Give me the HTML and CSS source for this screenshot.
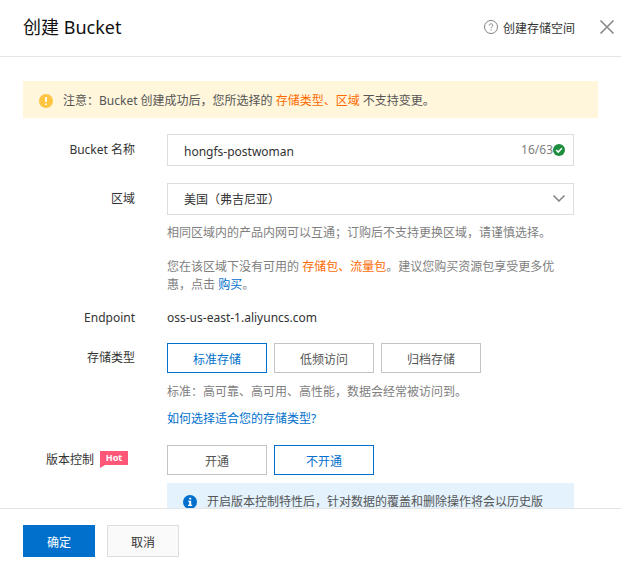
FILE: index.html
```
<!DOCTYPE html>
<html lang="zh-CN">
<head>
    <meta charset="UTF-8">
    <meta name="viewport" content="width=device-width, initial-scale=1.0">
    <title>创建 Bucket</title>
    <link rel="stylesheet" href="styles.css">
</head>
<body>
    <div class="drawer">
        <header class="header">
            <h1 class="title">创建 Bucket</h1>
            <a class="help-link" href="#">
                <svg width="14" height="14" viewBox="0 0 14 14" fill="none" stroke="#808080">
                    <circle cx="7" cy="7" r="6.5"/>
                    <path d="M5.2 5.6c0-1.1.8-1.8 1.8-1.8s1.8.7 1.8 1.6c0 1.2-1.7 1.3-1.7 2.8M7.1 9.3v1.1"/>
                </svg>
                创建存储空间
            </a>
            <button class="close" type="button" aria-label="关闭">
                <svg width="16" height="16" viewBox="0 0 16 16" stroke="#888" stroke-width="1.6">
                    <path d="M1.5 1.5l13 13M14.5 1.5l-13 13"/>
                </svg>
            </button>
        </header>

        <form class="content" id="bucketForm">
            <div class="notice">
                <svg width="14" height="14" viewBox="0 0 14 14">
                    <circle cx="7" cy="7" r="7" fill="#ffc440"/>
                    <path d="M7 3v5M7 9.5v1.6" stroke="#fff" stroke-width="1.8"/>
                </svg>
                <p>注意：Bucket 创建成功后，您所选择的 <span class="warn">存储类型、区域</span> 不支持变更。</p>
            </div>

            <div class="row">
                <label class="label" for="bucketName">Bucket 名称</label>
                <div class="field">
                    <div class="box">
                        <input class="control" type="text" id="bucketName" value="hongfs-postwoman">
                        <span class="count">16/63</span>
                        <svg width="12" height="12" viewBox="0 0 12 12">
                            <circle cx="6" cy="6" r="6" fill="#1e8e3e"/>
                            <path d="M3.2 6l2 2 3.7-3.7" fill="none" stroke="#fff" stroke-width="1.6"/>
                        </svg>
                    </div>
                </div>
            </div>

            <div class="row">
                <label class="label" for="region">区域</label>
                <div class="field">
                    <div class="box">
                        <select class="control" id="region">
                            <option>美国（弗吉尼亚）</option>
                        </select>
                        <svg class="arrow" width="12" height="12" viewBox="0 0 12 12" fill="none" stroke="#808080" stroke-width="1.5">
                            <path d="M.5 2.5L6 8l5.5-5.5"/>
                        </svg>
                    </div>
                    <p class="tip">相同区域内的产品内网可以互通；订购后不支持更换区域，请谨慎选择。</p>
                    <p class="tip tip-package">您在该区域下没有可用的 <span class="warn">存储包、流量包</span>。建议您购买资源包享受更多优惠，点击 <a class="link" href="#">购买</a>。</p>
                </div>
            </div>

            <div class="row row-text">
                <div class="label">Endpoint</div>
                <div class="field">oss-us-east-1.aliyuncs.com</div>
            </div>

            <div class="row" role="radiogroup" aria-labelledby="storageLabel">
                <div class="label" id="storageLabel">存储类型</div>
                <div class="field">
                    <div class="options">
                        <label class="option"><input type="radio" name="storage" checked><span>标准存储</span></label>
                        <label class="option"><input type="radio" name="storage"><span>低频访问</span></label>
                        <label class="option"><input type="radio" name="storage"><span>归档存储</span></label>
                    </div>
                    <p class="tip">标准：高可靠、高可用、高性能，数据会经常被访问到。</p>
                    <p class="tip"><a class="link" href="#">如何选择适合您的存储类型?</a></p>
                </div>
            </div>

            <div class="row" role="radiogroup" aria-labelledby="versionLabel">
                <div class="label label-hot">
                    <span id="versionLabel">版本控制</span>
                    <span class="hot">Hot</span>
                </div>
                <div class="field">
                    <div class="options">
                        <label class="option"><input type="radio" name="version"><span>开通</span></label>
                        <label class="option"><input type="radio" name="version" checked><span>不开通</span></label>
                    </div>
                    <div class="info">
                        <svg width="14" height="14" viewBox="0 0 14 14">
                            <circle cx="7" cy="7" r="7" fill="#0070cc"/>
                            <path d="M6.2 2.8h2v1.8h-2zM5.3 5.8h2.9v4h1v1.2H5v-1.2h1.2V7h-.9z" fill="#fff"/>
                        </svg>
                        <p>开启版本控制特性后，针对数据的覆盖和删除操作将会以历史版</p>
                    </div>
                </div>
            </div>
        </form>

        <footer class="footer">
            <button class="btn btn-primary" type="submit" form="bucketForm">确定</button>
            <button class="btn" type="button">取消</button>
        </footer>
    </div>
</body>
</html>
```

FILE: styles.css
```
* {
    box-sizing: border-box;
}
body {
    margin: 0;
    font-family: "Noto Sans", "Noto Sans CJK SC", sans-serif;
    font-size: 12px;
    line-height: 18px;
    color: #333;
    background-color: #fff;
}
p {
    margin: 0;
}
svg {
    flex: none;
}
button, input, select {
    font: inherit;
    color: inherit;
}
.drawer {
    display: flex;
    flex-direction: column;
    height: 100vh;
}

/* Header */
.header {
    display: flex;
    align-items: center;
    flex: none;
    height: 57px;
    padding: 0 6px 2px 23px;
    border-bottom: 1px solid #e5e5e5;
}
.title {
    flex: 1;
    margin: 0;
    font-size: 18px;
    font-weight: normal;
    line-height: 24px;
    color: #111;
}
.help-link {
    display: flex;
    align-items: flex-start;
    gap: 5px;
    padding-top: 4px;
    color: #333;
    text-decoration: none;
}
.close {
    display: flex;
    margin-left: 24px;
    padding: 0;
    border: none;
    background: none;
}

/* Form */
.content {
    flex: 1;
    min-height: 0;
    overflow: hidden;
    padding: 24px 23px 0;
}
.notice {
    display: flex;
    align-items: center;
    gap: 10px;
    height: 37px;
    margin-bottom: 16px;
    padding: 2px 16px 0;
    color: #555;
    background-color: #fff6db;
}
.warn {
    color: #ff6a00;
}
.link {
    color: #0070cc;
    text-decoration: none;
}
.row {
    display: flex;
    gap: 32px;
    margin-bottom: 17px;
    padding-right: 24px;
}
.row-text {
    margin-top: -2px;
    margin-bottom: 16px;
}
.label {
    flex: none;
    width: 112px;
    padding-top: 6px;
    text-align: right;
}
label.label {
    padding-top: 7px;
}
.row-text .label {
    padding-top: 0;
}
.field {
    flex: 1;
    min-width: 0;
}
.box {
    display: flex;
    align-items: center;
    height: 32px;
    padding-right: 8px;
    border: 1px solid #dedede;
}
.control {
    flex: 1;
    min-width: 0;
    height: 30px;
    padding: 2px 16px 0;
    border: none;
    outline: none;
    background: none;
    appearance: none;
}
.count {
    color: #808080;
}
.arrow {
    pointer-events: none;
}
.tip {
    margin-top: 9px;
    color: #808080;
}
.tip-package {
    margin-top: 16px;
}
.options {
    display: flex;
    gap: 7px;
    padding-bottom: 1px;
}
.option input {
    position: absolute;
    opacity: 0;
}
.option span {
    display: block;
    width: 100px;
    height: 30px;
    border: 1px solid #c4c4c4;
    line-height: 32px;
    text-align: center;
    color: #555;
}
.option input:checked + span {
    border-color: #0070cc;
    color: #0070cc;
}
.label-hot {
    display: flex;
    justify-content: flex-end;
    align-items: flex-start;
    gap: 6px;
    padding-right: 7px;
}
.hot {
    position: relative;
    width: 28px;
    height: 14px;
    font-size: 9px;
    font-weight: bold;
    line-height: 14px;
    text-align: center;
    color: #fff;
    background-color: #ff5777;
}
.hot::after {
    content: "";
    position: absolute;
    left: 0;
    top: 100%;
    border-top: 3px solid #ff5777;
    border-right: 5px solid transparent;
}
.info {
    display: flex;
    align-items: flex-start;
    gap: 10px;
    margin-top: 7px;
    padding: 10px 16px;
    color: #555;
    background-color: #e3f2fd;
}
.info svg {
    margin-top: 2px;
}

/* Footer */
.footer {
    display: flex;
    flex: none;
    gap: 12px;
    padding: 16px 23px 6px;
    border-top: 1px solid #e5e5e5;
    background-color: #fff;
}
.btn {
    width: 72px;
    height: 32px;
    padding: 3px 0 0;
    border: 1px solid #dedede;
    background-color: #fafafa;
}
.btn-primary {
    border-color: #0070cc;
    color: #fff;
    background-color: #0070cc;
}
```
